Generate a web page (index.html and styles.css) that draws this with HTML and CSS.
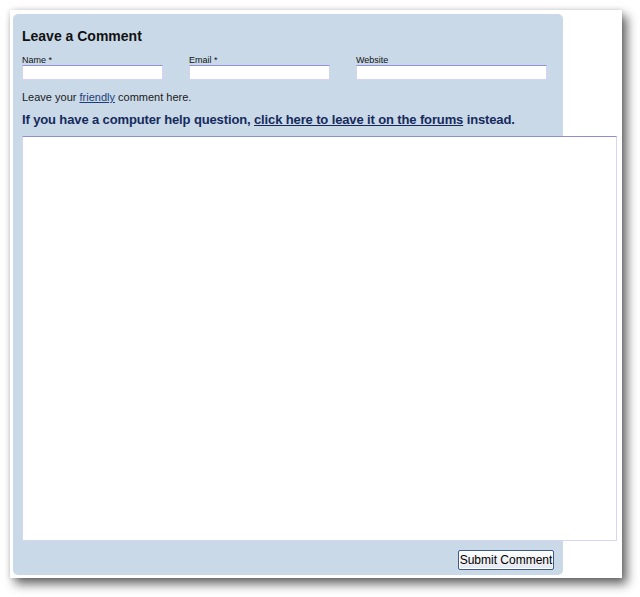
FILE: index.html
```html
<!DOCTYPE html>
<html>
<head>
<meta charset="utf-8">
<link rel="stylesheet" href="styles.css">
</head>
<body>
<div class="window">
  <form class="panel">
    <h2 class="title">Leave a Comment</h2>
    <div class="fields">
      <label class="field field-name"><span class="label">Name *</span><input class="input" type="text"></label>
      <label class="field field-email"><span class="label">Email *</span><input class="input" type="text"></label>
      <label class="field field-site"><span class="label">Website</span><input class="input" type="text"></label>
    </div>
    <p class="note">Leave your <a class="link" href="#">friendly</a> comment here.</p>
    <p class="help">If you have a computer help question, <a class="help-link" href="#">click here to leave it on the forums</a> instead.</p>
    <textarea class="comment"></textarea>
    <div class="actions"><button class="submit" type="button">Submit Comment</button></div>
  </form>
</div>
</body>
</html>
```
FILE: styles.css
```css
html, body {
  margin: 0;
  padding: 0;
  background: #ffffff;
}
body {
  font-family: "Liberation Sans", Arial, sans-serif;
  height: 597px;
  overflow: hidden;
}
.window {
  margin: 10px 0 0 10px;
  width: 612px;
  height: 568px;
  box-sizing: border-box;
  padding: 4px 0 0 3px;
  background: #ffffff;
  box-shadow: 5px 6px 10px rgba(0, 0, 0, 0.6), 0 0 5px rgba(0, 0, 0, 0.15);
}
.panel {
  display: flex;
  flex-direction: column;
  width: 550px;
  height: 561px;
  box-sizing: border-box;
  padding: 13px 9px 0 9px;
  background: #c9d9e8;
  border-radius: 5px;
}
.title {
  margin: 0;
  font-size: 14px;
  line-height: 18px;
  font-weight: bold;
  color: #111111;
}
.fields {
  display: flex;
  gap: 26px;
  margin-top: 10px;
}
.field {
  display: flex;
  flex-direction: column;
}
.field-name, .field-email { width: 141px; }
.field-site { width: 191px; }
.label {
  font-size: 9px;
  line-height: 10px;
  color: #111111;
}
.input {
  margin: 0;
  height: 15px;
  box-sizing: border-box;
  border: 1px solid #d4d4f2;
  border-top-color: #9090dc;
  background: #ffffff;
  padding: 0 2px;
}
.note {
  margin: 10px 0 0 0;
  font-size: 11px;
  line-height: 14px;
  color: #1a1a1a;
}
.link {
  color: #1d3d78;
  text-decoration: underline;
}
.help {
  margin: 8px 0 0 0;
  font-size: 13px;
  line-height: 16px;
  font-weight: bold;
  color: #162a5c;
  letter-spacing: -0.13px;
}
.help-link {
  color: #162a5c;
  text-decoration: underline;
}
.comment {
  margin: 8px 0 0 0;
  width: 595px;
  height: 405px;
  box-sizing: border-box;
  flex: none;
  border: 1px solid #d6d6f2;
  border-top-color: #8e8ed8;
  background: #ffffff;
  resize: none;
  padding: 2px;
}
.actions {
  display: flex;
  justify-content: flex-end;
  margin-top: 9px;
}
.submit {
  height: 20px;
  width: 96px;
  box-sizing: border-box;
  padding: 0;
  font-family: "Liberation Sans", Arial, sans-serif;
  font-size: 12px;
  color: #000000;
  background: linear-gradient(#fdfdfd, #e4e8f0);
  border: 1px solid #3c5a8c;
  border-radius: 2px;
  box-shadow: inset 0 0 0 1px #ffffff;
}
```
